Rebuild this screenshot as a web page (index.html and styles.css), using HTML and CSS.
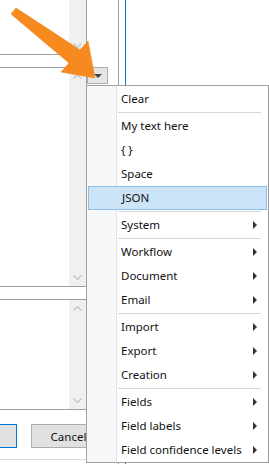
FILE: index.html
```html
<!DOCTYPE html>
<html lang="en">
<head>
    <meta charset="UTF-8">
    <meta name="viewport" content="width=device-width, initial-scale=1.0">
    <title>Context menu</title>
    <link rel="stylesheet" href="styles.css">
</head>
<body>
    <div class="dialog">
        <div class="fields">
            <div class="box box-a">
                <div class="text"></div>
                <div class="scroll">
                    <span class="chev"><svg width="9" height="5" viewBox="0 0 9 5"><polyline points="0.5,0.5 4.5,4.5 8.5,0.5"/></svg></span>
                </div>
            </div>
            <div class="gap"></div>
            <div class="box box-b">
                <div class="text"></div>
                <div class="scroll">
                    <span class="chev"><svg width="9" height="5" viewBox="0 0 9 5"><polyline points="0.5,4.5 4.5,0.5 8.5,4.5"/></svg></span>
                    <span class="chev"><svg width="9" height="5" viewBox="0 0 9 5"><polyline points="0.5,0.5 4.5,4.5 8.5,0.5"/></svg></span>
                </div>
            </div>
            <div class="gap"></div>
            <div class="box box-c">
                <div class="text"></div>
                <div class="scroll">
                    <span class="chev"><svg width="9" height="5" viewBox="0 0 9 5"><polyline points="0.5,4.5 4.5,0.5 8.5,4.5"/></svg></span>
                    <span class="chev"><svg width="9" height="5" viewBox="0 0 9 5"><polyline points="0.5,0.5 4.5,4.5 8.5,0.5"/></svg></span>
                </div>
            </div>
            <div class="footer">
                <button class="btn btn-ok"></button>
                <button class="btn">Cancel</button>
            </div>
        </div>

        <div class="side">
            <div class="lane lane-drop">
                <div class="drop"><span class="drop-arrow"></span></div>
            </div>
            <div class="lane lane-thin"></div>
            <div class="lane lane-rest"></div>
        </div>
    </div>

    <!-- callout arrow pointing at the dropdown -->
    <svg class="pointer" width="100" height="85" viewBox="0 0 100 85">
        <path d="M16,8 Q50,30 80,50 L88,41 L95,78 L61,72 L69,63 Q38,37 11,14 Z"/>
    </svg>

    <div class="menu">
        <div class="item">Clear</div>
        <div class="sep"></div>
        <div class="item">My text here</div>
        <div class="item">{ }</div>
        <div class="item">Space</div>
        <div class="item active">JSON</div>
        <div class="sep"></div>
        <div class="item sub">System</div>
        <div class="sep"></div>
        <div class="item sub">Workflow</div>
        <div class="item sub">Document</div>
        <div class="item sub">Email</div>
        <div class="sep"></div>
        <div class="item sub">Import</div>
        <div class="item sub">Export</div>
        <div class="item sub">Creation</div>
        <div class="sep"></div>
        <div class="item sub">Fields</div>
        <div class="item sub">Field labels</div>
        <div class="item sub">Field confidence levels</div>
    </div>
</body>
</html>
```

FILE: styles.css
```css
body {
    margin: 0;
    width: 269px;
    height: 464px;
    overflow: hidden;
    position: relative;
    background: #ffffff;
    font-family: "Noto Sans", "Open Sans", sans-serif;
    font-size: 11.5px;
    color: #111111;
}

.dialog {
    display: flex;
    height: 464px;
}

/* left column with the text boxes */
.fields {
    width: 87px;
    flex: none;
    display: flex;
    flex-direction: column;
}

.box {
    display: flex;
    box-sizing: border-box;
    border-right: 1px solid #a0a0a0;
    background: #ffffff;
}

.box-a {
    height: 55px;
    border-bottom: 1px solid #a0a0a0;
}

.box-b {
    height: 220px;
    border-top: 1px solid #a0a0a0;
    border-bottom: 1px solid #a0a0a0;
}

.box-c {
    height: 111px;
    border-top: 1px solid #a0a0a0;
    border-bottom: 1px solid #a0a0a0;
}

.gap {
    height: 12px;
    border-right: 1px solid #a0a0a0;
}

.text {
    flex: 1;
}

.scroll {
    width: 17px;
    background: #f0f0f0;
    display: flex;
    flex-direction: column;
    justify-content: space-between;
}

.box-a .scroll {
    justify-content: flex-end;
}

.chev {
    height: 17px;
    display: flex;
    align-items: center;
    justify-content: center;
}

.chev polyline {
    fill: none;
    stroke: #c2c2c2;
    stroke-width: 1.2;
}

.footer {
    flex: 1;
    display: flex;
    gap: 14px;
    padding-top: 14px;
    margin-left: -58px;
    background: #ffffff;
    border-bottom: 1px solid #dcdcdc;
    margin-bottom: 4px;
}

.btn {
    width: 75px;
    height: 24px;
    flex: none;
    box-sizing: border-box;
    border: 1px solid #adadad;
    background: #e1e1e1;
    font-family: "Noto Sans", "Open Sans", sans-serif;
    font-size: 11.5px;
    color: #111111;
    padding: 0;
}

.btn-ok {
    border-color: #0078d7;
}

/* strip to the right of the boxes */
.side {
    flex: 1;
    display: flex;
}

.lane-drop {
    width: 31px;
}

.lane-thin {
    width: 6px;
    border-left: 1px solid #a0a0a0;
}

.lane-rest {
    flex: 1;
    border-left: 1px solid #0078d7;
}

.drop {
    margin-top: 67px;
    width: 21px;
    height: 17px;
    box-sizing: border-box;
    border: 1px solid #adadad;
    background: #e5e5e5;
    display: flex;
    align-items: center;
    justify-content: center;
}

.drop-arrow {
    width: 0;
    height: 0;
    border-left: 4px solid transparent;
    border-right: 4px solid transparent;
    border-top: 4px solid #444444;
}

.pointer {
    position: absolute;
    left: 0;
    top: 0;
}

.pointer path {
    fill: #f68a1e;
    stroke: #f08015;
    stroke-width: 0.5;
}

/* popup menu */
.menu {
    position: absolute;
    left: 86px;
    top: 85px;
    width: 183px;
    height: 378px;
    box-sizing: border-box;
    border: 1px solid #a0a0a0;
    border-right-color: #999999;
    padding-top: 1px;
    background: linear-gradient(to right, #f7f8fa 0 29px, #e3e3e3 29px 30px, #ffffff 30px);
}

.item {
    height: 24px;
    line-height: 24px;
    padding-left: 34px;
    position: relative;
    white-space: nowrap;
}

.item.sub::after {
    content: "";
    position: absolute;
    right: 11px;
    top: 8px;
    border-top: 4px solid transparent;
    border-bottom: 4px solid transparent;
    border-left: 4px solid #333333;
}

.item.active {
    margin: 0 1px;
    padding-left: 33px;
    box-sizing: border-box;
    background: #cce4f7;
    border: 1px solid #8cbdec;
    line-height: 22px;
}

.sep {
    height: 1px;
    margin: 1px 7px 1px 31px;
    background: #d7d7d7;
}
```
